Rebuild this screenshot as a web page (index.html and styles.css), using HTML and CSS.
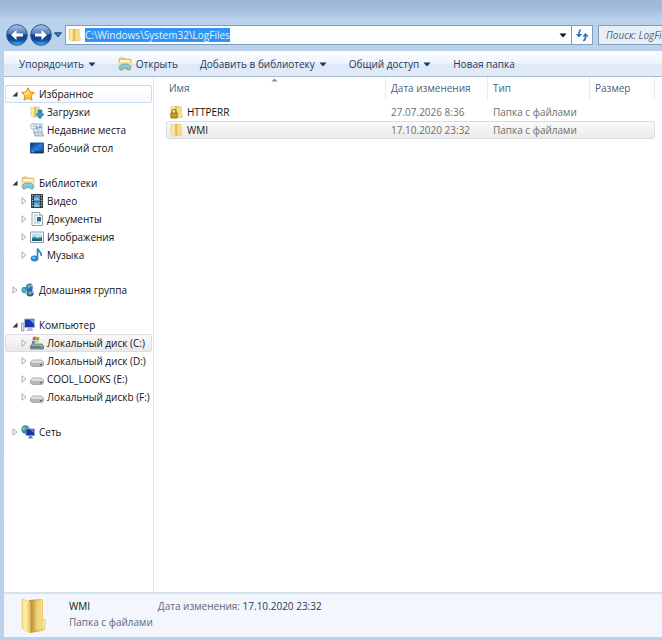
FILE: index.html
```html
<!DOCTYPE html>
<html lang="ru">
<head>
<meta charset="utf-8">
<title>LogFiles</title>
<link rel="stylesheet" href="styles.css">
</head>
<body>
<svg class="defs" aria-hidden="true">
  <defs>
    <linearGradient id="gold" x1="0" x2="1"><stop offset="0" stop-color="#f6dc83"/><stop offset=".45" stop-color="#fff0ac"/><stop offset="1" stop-color="#e6c460"/></linearGradient>
    <linearGradient id="inner" x1="0" x2="1"><stop offset="0" stop-color="#b98d2a"/><stop offset="1" stop-color="#f7d873"/></linearGradient>
    <linearGradient id="shade" x1="0" x2="1"><stop offset="0" stop-color="#c9a444"/><stop offset=".4" stop-color="#ecd079"/><stop offset="1" stop-color="#f8e28e"/></linearGradient>
    <linearGradient id="orb" x1="0" y1="0" x2="0" y2="1"><stop offset="0" stop-color="#b4c9e6"/><stop offset=".45" stop-color="#4776bb"/><stop offset=".5" stop-color="#103f8e"/><stop offset=".75" stop-color="#12489c"/><stop offset="1" stop-color="#48c4f4"/></linearGradient>
    <linearGradient id="metal" x1="0" y1="0" x2="0" y2="1"><stop offset="0" stop-color="#f4f4f4"/><stop offset="1" stop-color="#a9acae"/></linearGradient>
    <linearGradient id="blue" x1="0" y1="0" x2="1" y2="1"><stop offset="0" stop-color="#0c2c78"/><stop offset=".5" stop-color="#2f7bd6"/><stop offset="1" stop-color="#12409a"/></linearGradient>
    <symbol id="folder" viewBox="0 0 14 14"><path d="M5 1h6l1 1v7l1 1v2l-1 1H5z" fill="url(#shade)"/><path d="M7 2h4v10H7z" fill="#f5dc86"/><path d="M1 1l5 1v11.500L2 12l-1-1z" fill="url(#gold)" stroke="#e2c567" stroke-width=".5"/></symbol>
    <symbol id="library" viewBox="0 0 14 14"><path d="M1 2l1-1h4l1 1h5l1 1v9H1z" fill="#e8cd71" stroke="#c9a94b" stroke-width=".6"/><path d="M2 3h10v2H2z" fill="#fff8d2"/><path d="M1 5h12v4H1z" fill="#f5e296"/><path d="M2 13V9l2-2h6l2 2v4H9.500v-2h-5v2z" fill="#8bcbe4" stroke="#4a9dc4" stroke-width=".7"/></symbol>
    <symbol id="drive" viewBox="0 0 14 14"><path d="M3 6h8l2.500 2v3L12 12.500H2L.5 11V8z" fill="url(#metal)" stroke="#94979a" stroke-width=".8"/><path d="M1 9h12.500v2L12 12.500H2L1 11z" fill="#b4b7b9"/><path d="M10 10h2v1.200h-2z" fill="#4e6753"/></symbol>
    <symbol id="open" viewBox="0 0 6 6"><path d="M5.500.5v5h-5z" fill="#333"/></symbol>
    <symbol id="closed" viewBox="0 0 6 8"><path d="M1 .8L5 4 1 7.200z" fill="#fff" stroke="#a2a2a2" stroke-width=".9"/></symbol>
    <symbol id="down" viewBox="0 0 8 5"><path d="M.5.5h7L4 4.500z" fill="currentColor"/></symbol>
  </defs>
</svg>
<div class="window">
  <header class="topbar">
    <button class="orb" aria-label="Назад"><svg viewBox="0 0 22 22"><circle cx="11" cy="11" r="10.300" fill="url(#orb)" stroke="#29578f"/><path d="M5 11l5.500-5v3.500H17v3h-6.500V16z" fill="#fff"/></svg></button>
    <button class="orb" aria-label="Вперед"><svg viewBox="0 0 22 22"><circle cx="11" cy="11" r="10.300" fill="url(#orb)" stroke="#29578f"/><path d="M17 11l-5.500-5v3.500H5v3h6.500V16z" fill="#fff"/></svg></button>
    <button class="history" aria-label="Последние страницы"><svg viewBox="0 0 8 6"><path d="M.5.800h7L4 5z" fill="#357fb7" stroke="#174f7c"/></svg></button>
    <div class="address">
      <svg class="icon"><use href="#folder"/></svg>
      <input class="path" aria-label="Адрес" value="C:\Windows\System32\LogFiles">
      <button class="drop" aria-label="Предыдущие расположения"><svg class="caret"><use href="#down"/></svg></button>
      <button class="refresh" aria-label="Обновить"><svg viewBox="0 0 14 14"><path d="M6 2C4 2 4 4 4 7M8 12.500c2.500 0 2.500-2 2.500-5" fill="none" stroke="#2d72bd" stroke-width="1.600"/><path d="M.8 6h6.400L4 9.500zM7.300 8.500L10.500 5l3.200 3.500z" fill="#2d72bd"/></svg></button>
    </div>
    <input class="search" aria-label="Поиск" placeholder="Поиск: LogFiles">
  </header>
  <nav class="commands" aria-label="Команды">
    <button>Упорядочить<svg class="caret"><use href="#down"/></svg></button>
    <button><svg class="icon"><use href="#library"/></svg>Открыть</button>
    <button>Добавить в библиотеку<svg class="caret"><use href="#down"/></svg></button>
    <button>Общий доступ<svg class="caret"><use href="#down"/></svg></button>
    <button>Новая папка</button>
  </nav>
  <main class="content">
    <aside class="tree">
      <ul>
        <li><a href="#" class="root focus"><svg class="twist"><use href="#open"/></svg><svg class="icon" viewBox="0 0 14 14"><path d="M7 .8l1.900 4.100 4.500.6-3.300 3.100.9 4.500L7 10.900l-4 2.200.9-4.500L.6 5.500l4.500-.6z" fill="#ffc83a" stroke="#dc8920"/><path d="M7 2.500l1 3.200-3.500 2L2.500 6 6 5.500z" fill="#fff09b"/></svg>Избранное</a></li>
        <li><a href="#"><span class="twist"></span><svg class="icon" viewBox="0 0 14 14"><use href="#folder" width="12" height="14"/><path d="M8 5h4v4h2l-4 5-4-5h2z" fill="#2d95c9" stroke="#1c709f" stroke-width=".6"/></svg>Загрузки</a></li>
        <li><a href="#"><span class="twist"></span><svg class="icon" viewBox="0 0 14 14"><path d="M3 1h9v9H4z" fill="#e8eef4" stroke="#9aa7b4" stroke-width=".8"/><path d="M4 9h8l1.500 4H5z" fill="#cdd7df" stroke="#8a9bab" stroke-width=".8"/><path d="M6 4h2v2H6zM9 3h2v2H9zM7 7h3" fill="#7da5c6" stroke="#7da5c6" stroke-width=".6"/><circle cx="3.300" cy="3.300" r="2.800" fill="#f7fafc" stroke="#8ca8bb" stroke-width=".8"/><path d="M3.300 1.800v1.700h1.500" fill="none" stroke="#5784a5" stroke-width=".6"/></svg>Недавние места</a></li>
        <li><a href="#"><span class="twist"></span><svg class="icon" viewBox="0 0 14 14"><path d="M.5 2h13v10H.5z" fill="url(#blue)" stroke="#22528e"/><path d="M1 10.500h12V12H1z" fill="#153466"/><path d="M1.500 10.800h2" stroke="#6fc8ef"/></svg>Рабочий стол</a></li>
      </ul>
      <ul>
        <li><a href="#" class="root"><svg class="twist"><use href="#open"/></svg><svg class="icon"><use href="#library"/></svg>Библиотеки</a></li>
        <li><a href="#"><svg class="twist"><use href="#closed"/></svg><svg class="icon" viewBox="0 0 14 14"><path d="M1 0h12v14H1z" fill="#344047"/><path d="M4 1h6v5.500H4zM4 7.500h6V13H4z" fill="#4a93cc"/><path d="M4 5l3-2 3 3.500H4zM4 11l3-2 3 4H4z" fill="#8ac4df"/><path d="M2.500 1v12M11.500 1v12" stroke="#cfd8db" stroke-dasharray="1 1.500"/></svg>Видео</a></li>
        <li><a href="#"><svg class="twist"><use href="#closed"/></svg><svg class="icon" viewBox="0 0 14 14"><path d="M2 .5h7.500l3 3v10H2z" fill="#fafcfd" stroke="#8798a2" stroke-width=".9"/><path d="M9.500.5v3h3" fill="#d9e2e8" stroke="#8798a2" stroke-width=".7"/><path d="M4 3h4M4 5h2M4 7h2M4 9h2M4 11h6" stroke="#9cabb5" stroke-width=".8"/><path d="M7 5h4v4.500H7z" fill="#286999"/></svg>Документы</a></li>
        <li><a href="#"><svg class="twist"><use href="#closed"/></svg><svg class="icon" viewBox="0 0 14 14"><path d="M.5 2h13v10.500H.5z" fill="#fff" stroke="#7c8e96" stroke-width=".9"/><path d="M2 3.500h10V11H2z" fill="#b8e1f2"/><path d="M2 8l2.500-1.500L7 8l5-1v4H2z" fill="#297d83"/><path d="M2 9.500h10V11H2z" fill="#195774"/></svg>Изображения</a></li>
        <li><a href="#"><svg class="twist"><use href="#closed"/></svg><svg class="icon" viewBox="0 0 14 14"><ellipse cx="4.500" cy="10.500" rx="3.800" ry="3" fill="#2587d3"/><ellipse cx="3.800" cy="9.800" rx="1.700" ry="1" fill="#8bcdf5"/><path d="M7.500 11V.5c.5 3 5 3.500 3.500 7.500" fill="none" stroke="#2480c9" stroke-width="1.600"/></svg>Музыка</a></li>
      </ul>
      <ul>
        <li><a href="#" class="root"><svg class="twist"><use href="#closed"/></svg><svg class="icon" viewBox="0 0 14 14"><circle cx="8.500" cy="4" r="3.500" fill="#3175c6"/><circle cx="3.800" cy="7" r="3.300" fill="#3697ad"/><circle cx="9" cy="10" r="3.600" fill="#2455b5"/><path d="M7 1.500l3 .5-1 3-3-1zM2 5.500l3 1-1 3-2-1zM8 8l3 1-1 3-3-1z" fill="#72bd61"/><path d="M10.500 2l1 2M5 8l1 2M11 8l1 2" stroke="#d4ebf8"/></svg>Домашняя группа</a></li>
      </ul>
      <ul>
        <li><a href="#" class="root"><svg class="twist"><use href="#open"/></svg><svg class="icon" viewBox="0 0 14 14"><path d="M.5 5h2.500v8H.5z" fill="#d8dce0" stroke="#85919b" stroke-width=".7"/><path d="M3.500 1h10v8.500h-10z" fill="#1637b4" stroke="#a9b5c1"/><path d="M8.500 1.500H13V6z" fill="#7498eb"/><path d="M7 10h4l1 3H5z" fill="#b9c2c9"/></svg>Компьютер</a></li>
        <li><a href="#" class="selected"><svg class="twist"><use href="#closed"/></svg><svg class="icon" viewBox="0 0 14 14"><path d="M2 8h10l1.500 2v3H.5v-3z" fill="#9fabae" stroke="#647477" stroke-width=".8"/><path d="M1 10h12v2.500H1z" fill="#5e8583"/><path d="M3 1l3-.5-.5 3.500-3 .5z" fill="#e45d2e"/><path d="M6.500.8l3 .7-.8 3.300-3-.8z" fill="#70b540"/><path d="M2.300 5l3-.6-.8 3.400-3 .6z" fill="#438cce"/><path d="M5.600 4.500l3 .8-.8 3.200-3-.8z" fill="#f5c636"/><path d="M11 10.500h1.500" stroke="#71eda2"/></svg>Локальный диск (C:)</a></li>
        <li><a href="#"><svg class="twist"><use href="#closed"/></svg><svg class="icon"><use href="#drive"/></svg>Локальный диск (D:)</a></li>
        <li><a href="#"><svg class="twist"><use href="#closed"/></svg><svg class="icon"><use href="#drive"/></svg>COOL_LOOKS (E:)</a></li>
        <li><a href="#"><svg class="twist"><use href="#closed"/></svg><svg class="icon"><use href="#drive"/></svg>Локальный дискb (F:)</a></li>
      </ul>
      <ul>
        <li><a href="#" class="root"><svg class="twist"><use href="#closed"/></svg><svg class="icon" viewBox="0 0 14 14"><circle cx="4.500" cy="4.500" r="4.200" fill="#2586bc"/><path d="M2 1.500l3 .5-.5 2.500L2 6 .7 4.500zM6 1l2 2-2 2z" fill="#72c578"/><path d="M5 4h8.500v6.500H5z" fill="#1335a5" stroke="#8795ba" stroke-width=".8"/><path d="M9 4.500h4V8z" fill="#587fdb"/><path d="M8 11h3l1 2.500H7z" fill="#6c88b4"/></svg>Сеть</a></li>
      </ul>
    </aside>
    <section class="files">
      <svg class="sort" viewBox="0 0 7 4"><path d="M.5 3.500l3-3 3 3z" fill="#6f8fa5"/></svg>
      <table>
        <colgroup><col class="c-name"><col class="c-date"><col class="c-type"><col class="c-size"></colgroup>
        <thead><tr><th>Имя</th><th>Дата изменения</th><th>Тип</th><th>Размер</th></tr></thead>
        <tbody>
          <tr><td><span class="name"><svg class="icon" viewBox="0 0 14 14"><use href="#folder" width="14" height="14"/><path d="M2 8V6.500c0-3 4-3 4 0V8" fill="none" stroke="#987619" stroke-width="1.200"/><path d="M.8 8h6.400v5H.8z" fill="#c49a20" stroke="#886410" stroke-width=".7"/></svg>HTTPERR</span></td><td>27.07.2026 8:36</td><td>Папка с файлами</td><td></td></tr>
          <tr class="selected"><td><span class="name"><svg class="icon"><use href="#folder"/></svg>WMI</span></td><td>17.10.2020 23:32</td><td>Папка с файлами</td><td></td></tr>
        </tbody>
      </table>
    </section>
  </main>
  <footer class="details">
    <svg class="preview" viewBox="0 0 26 36"><path d="M8 2l13-1 1 1v19l2 2v9l-3 1-12 2z" fill="url(#inner)"/><path d="M12 3l9-1v20l1 9-10 2z" fill="url(#shade)"/><path d="M21 21l3 1v9l-3 1z" fill="#fbe9a0" stroke="#dcbb58" stroke-width=".6"/><path d="M1 1l8 3v31L2 31l-1-2z" fill="url(#gold)" stroke="#e6cc74" stroke-width=".8"/></svg>
    <div class="item"><strong>WMI</strong><span>Папка с файлами</span></div>
    <div class="meta">Дата изменения: <b>17.10.2020 23:32</b></div>
  </footer>
</div>
</body>
</html>
```
FILE: styles.css
```css
* { box-sizing: border-box; }
body {
  margin: 0;
  overflow: hidden;
  font: 10px/18px "Open Sans", "Noto Sans", sans-serif;
  color: #111;
}
button, input { font: inherit; color: inherit; border: 0; padding: 0; margin: 0; background: none; }
svg { display: block; flex: none; }
.defs { position: absolute; width: 0; height: 0; }
.icon { width: 14px; height: 14px; }
.caret { width: 8px; height: 5px; }

.window {
  min-height: 100vh;
  display: flex;
  flex-direction: column;
  padding: 0 0 3px 4px;
  background: linear-gradient(#9db7d9 0, #a2bbdc 8px, #bad2eb 20px, #bad2eb 50px, #b9d1eb 100%);
}
.topbar { display: flex; align-items: center; height: 51px; padding-top: 19px; }
.orb { width: 22px; height: 22px; margin-left: 2px; }
.orb svg { width: 22px; height: 22px; }
.history { margin: 0 2px 0 1px; padding: 0 1px; }
.history svg { width: 8px; height: 6px; }
.address {
  flex: 1;
  min-width: 0;
  height: 20px;
  display: flex;
  align-items: center;
  padding-left: 2px;
  background: #fdfeff;
  border: 1px solid #829db9;
}
.path {
  field-sizing: content;
  height: 14px;
  margin-left: 3px;
  line-height: 14px;
  background: #3095f2;
  color: #e4f3ff;
}
.drop { margin-left: auto; padding: 6px 4px; color: #111; }
.refresh { align-self: stretch; display: flex; align-items: center; justify-content: center; width: 21px; border-left: 1px solid #829db9; }
.refresh svg { width: 14px; height: 14px; }
.search {
  width: 64px;
  height: 20px;
  margin-left: 5px;
  padding-left: 7px;
  border: 1px solid #829db9;
  border-right: 0;
  background: #e5eef9;
  font-style: italic;
}
.search::placeholder { color: #596570; opacity: 1; }

.commands {
  display: flex;
  align-items: center;
  gap: 22px;
  height: 26px;
  padding-left: 15px;
  border-top: 1px solid #f8fbff;
  border-bottom: 1px solid #a5b9d3;
  background: linear-gradient(#fafcff 0, #edf3fc 50%, #dde7f6 51%, #e3ebf8 100%);
  color: #1e395b;
}
.commands button { display: flex; align-items: center; gap: 4px; white-space: nowrap; }

.content { flex: 1; display: flex; background: #fff; }
.tree { width: 150px; padding: 8px 1px 0; border-right: 1px solid #dbe7f4; }
.tree ul { list-style: none; margin: 0 0 17px; padding: 0; }
.tree a {
  display: flex;
  align-items: center;
  height: 18px;
  padding-left: 15px;
  border: 1px solid transparent;
  border-radius: 2px;
  color: inherit;
  text-decoration: none;
  white-space: nowrap;
}
.tree .root { padding-left: 6px; }
.tree .focus { border-color: #c5dcf4; background: linear-gradient(#fff, #f5f9fd); }
.tree .selected { border-color: #dedede; background: linear-gradient(#f9f9f9, #e9e9e9); }
.twist { flex: none; width: 6px; height: 8px; margin-right: 3px; }
.tree .icon { margin-right: 3px; }
.tree .root .icon { margin-right: 4px; }

.files { flex: 1; min-width: 0; position: relative; padding: 0 7px 0 12px; }
.sort { position: absolute; left: 117px; top: 1px; width: 7px; height: 4px; }
table { width: 100%; table-layout: fixed; border-collapse: separate; border-spacing: 0; }
.c-name { width: 220px; }
.c-date, .c-type { width: 102px; }
th, td { padding: 0 0 0 5px; text-align: left; white-space: nowrap; color: #6d6d6d; }
th { height: 22px; font-weight: 400; color: #4c607a; border-right: 1px solid #e5eaf0; }
th:first-child { padding-left: 3px; }
td { height: 18px; line-height: 16px; border: solid transparent; border-width: 1px 0; }
td:first-child { padding-left: 3px; color: #111; border-left-width: 1px; border-radius: 3px 0 0 3px; }
td:last-child { border-right-width: 1px; border-radius: 0 3px 3px 0; }
tbody::before { content: ""; display: block; height: 4px; }
.selected td { border-color: #dcdcdc; background: linear-gradient(#fafafa, #ebebeb); background-clip: padding-box; }
.name { display: flex; align-items: center; gap: 3px; }

.details {
  display: flex;
  height: 45px;
  padding: 4px 0 0 17px;
  border-top: 2px solid #d5e2f0;
  background: #f3f6fc;
  line-height: 16px;
  color: #5c6878;
}
.preview { width: 26px; height: 36px; }
.item { display: flex; flex-direction: column; margin-left: 22px; }
.item strong { font-weight: 400; color: #111; }
.meta { margin-left: 5px; }
.meta b { font-weight: 400; color: #1e395b; }
```
